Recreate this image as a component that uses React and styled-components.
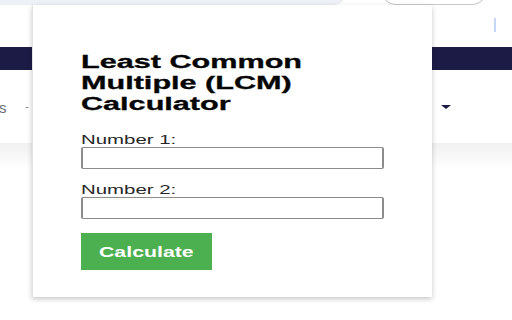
import React from "react";
import styled, { createGlobalStyle } from "styled-components";

const GlobalStyle = createGlobalStyle`
  html, body {
    margin: 0;
    padding: 0;
    background: #ffffff;
  }

  body {
    font-family: "Liberation Sans", Arial, sans-serif;
    overflow: hidden;
  }
`;

const Screen = styled.div`
  position: relative;
  width: 512px;
  height: 320px;
  overflow: hidden;
  background: #ffffff;
`;

const TopStrip = styled.div`
  display: flex;
  align-items: flex-end;
  height: 5px;
  overflow: hidden;
`;

const Tab = styled.div`
  width: 347px;
  height: 24px;
  flex: none;
  background: #eef0f8;
  border-radius: 0 0 14px 0;
`;

const Pill = styled.div`
  width: 104px;
  height: 24px;
  flex: none;
  margin-left: 35px;
  background: #ffffff;
  border: 1px solid #c8c8c8;
  border-top: none;
  border-radius: 0 0 14px 14px;
  box-sizing: border-box;
`;

const Header = styled.div`
  display: flex;
  justify-content: flex-end;
  height: 42px;
  padding-right: 16px;
`;

const Caret = styled.div`
  width: 2px;
  height: 14px;
  margin-top: 13px;
  background: #c6d6f6;
`;

const NavBar = styled.div`
  height: 23px;
  background: #1c1b45;
`;

const SubNav = styled.div`
  display: flex;
  align-items: center;
  justify-content: space-between;
  height: 73px;
  padding-right: 61px;
`;

const NavGroup = styled.div`
  display: flex;
  align-items: center;
  gap: 18px;
  margin-top: 2px;
`;

const NavText = styled.span`
  font-size: 15px;
  color: #6a6e73;
  margin-left: -1px;
`;

const Arrow = styled.span`
  width: 0;
  height: 0;
  border-left: ${p => p.$size}px solid transparent;
  border-right: ${p => p.$size}px solid transparent;
  border-top: ${p => p.$size * 0.8}px solid ${p => p.$color};
`;

const Fade = styled.div`
  height: 27px;
  background: linear-gradient(#f1f1f1, #ffffff);
`;

const Popup = styled.div`
  position: absolute;
  top: 5px;
  left: 32px;
  width: 400px;
  padding: 47px 48px 27px;
  box-sizing: border-box;
  background: #ffffff;
  border-left: 1px solid #e2e2e2;
  box-shadow: 0 2px 5px rgba(0, 0, 0, 0.22);
`;

const Title = styled.h2`
  width: 180px;
  margin: 0 0 18px;
  font-size: 18px;
  line-height: 21px;
  font-weight: bold;
  color: #050505;
  -webkit-text-stroke: 0.3px #050505;
  transform: scaleX(1.7);
  transform-origin: left top;
`;

const Field = styled.div`
  display: flex;
  flex-direction: column;
  margin-bottom: 14px;
`;

const Label = styled.label`
  display: block;
  height: 14px;
  font-size: 12px;
  line-height: 14px;
  color: #262626;
  white-space: nowrap;
  transform: scaleX(1.7);
  transform-origin: left top;
`;

const Input = styled.input`
  width: 303px;
  height: 22px;
  margin: 0;
  padding: 0 4px;
  box-sizing: border-box;
  border: 1px solid #8c8c8c;
  border-left-width: 2px;
  border-right-width: 2px;
  border-radius: 2px;
  background: #ffffff;
  outline: none;
`;

const Button = styled.button`
  display: flex;
  align-items: center;
  justify-content: center;
  width: 131px;
  height: 37px;
  margin-top: 1px;
  padding: 0;
  border: none;
  background: #4caf50;
  color: #ffffff;
  font-family: inherit;
  font-size: 15px;
  font-weight: bold;
  cursor: pointer;
`;

const ButtonText = styled.span`
  display: inline-block;
  transform: scaleX(1.42);
`;

export default function App() {
  return (
    <>
      <GlobalStyle />
      <Screen>
        <TopStrip>
          <Tab />
          <Pill />
        </TopStrip>
        <Header>
          <Caret />
        </Header>
        <NavBar />
        <SubNav>
          <NavGroup>
            <NavText>s</NavText>
            <Arrow $size={2} $color="#5f6368" />
          </NavGroup>
          <Arrow $size={5.5} $color="#1c1b45" />
        </SubNav>
        <Fade />

        <Popup>
          <Title>Least Common Multiple (LCM) Calculator</Title>
          <Field>
            <Label htmlFor="num1">Number 1:</Label>
            <Input id="num1" type="number" />
          </Field>
          <Field>
            <Label htmlFor="num2">Number 2:</Label>
            <Input id="num2" type="number" />
          </Field>
          <Button>
            <ButtonText>Calculate</ButtonText>
          </Button>
        </Popup>
      </Screen>
    </>
  );
}
